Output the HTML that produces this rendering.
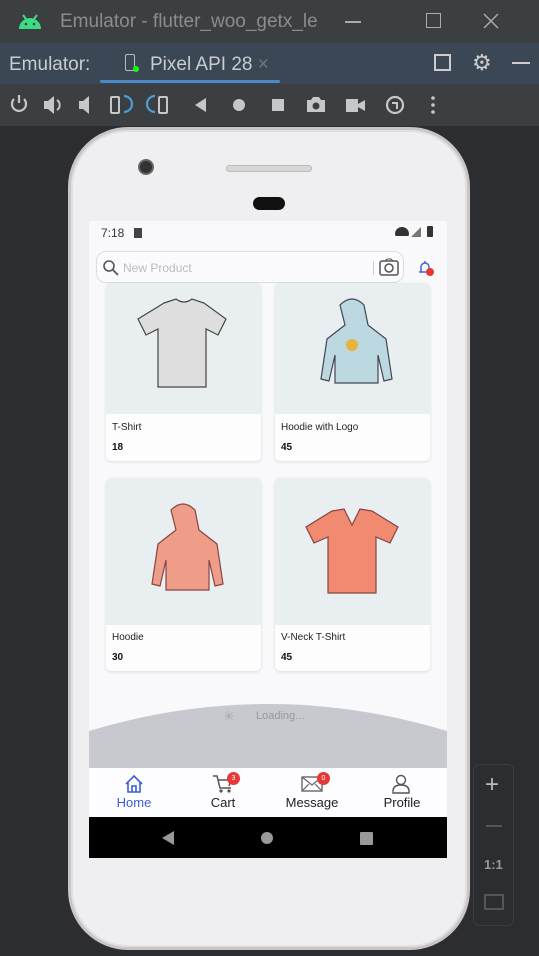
<!DOCTYPE html>
<html><head><meta charset="utf-8"><style>
*{margin:0;padding:0;box-sizing:border-box}
body{width:539px;height:956px;overflow:hidden;background:#2b2d30;font-family:"Liberation Sans",sans-serif;position:relative}
.abs{position:absolute}
.title{left:0;top:0;width:539px;height:43px;background:#3c3f41;color:#8a8d90;font-size:19px}
.tabbar{left:0;top:43px;width:539px;height:41px;background:#3b4754;color:#c9ccd0;font-size:19px}
.tool{left:0;top:84px;width:539px;height:42px;background:#3c3f41}
.phone{left:68px;top:127px;width:402px;height:823px;border-radius:60px;background:#efeff1;border:3px solid #c9c4c6;box-shadow:inset 0 0 0 2px #e2dfe0}
.screen{left:89px;top:221px;width:358px;height:637px;background:#f9f9fb;overflow:hidden}
.card{background:#fdfdfe;border-radius:5px;box-shadow:0 1px 3px rgba(0,0,0,.12);position:absolute;overflow:hidden}
.img{background:#e9eef1;position:absolute;left:0;top:0;width:100%}
.name{position:absolute;left:6px;font-size:10px;color:#222}
.price{position:absolute;left:6px;font-size:10px;font-weight:bold;color:#111}
.nav{font-size:13px;color:#222;text-align:center;position:absolute;top:27px;width:90px}
.badge{position:absolute;width:13px;height:13px;border-radius:50%;background:#e53935;color:#fff;font-size:7px;text-align:center;line-height:13px}
</style></head><body>
<div class="abs title">
 <svg class="abs" style="left:17px;top:12px" width="26" height="18" viewBox="0 0 26 18"><path d="M2 17a11 11 0 0 1 22 0z" fill="#3ddc84"/><path d="M6 3l3 4M20 3l-3 4" stroke="#3ddc84" stroke-width="2"/><circle cx="9" cy="12" r="1.3" fill="#3c3f41"/><circle cx="17" cy="12" r="1.3" fill="#3c3f41"/></svg>
 <div class="abs" style="left:60px;top:11px">Emulator - flutter_woo_getx_le</div>
 <div class="abs" style="left:345px;top:21px;width:16px;height:1.5px;background:#aaa"></div>
 <div class="abs" style="left:426px;top:13px;width:15px;height:15px;border:1.5px solid #aaa"></div>
 <svg class="abs" style="left:483px;top:13px" width="16" height="16" viewBox="0 0 16 16"><path d="M1 1l14 14M15 1L1 15" stroke="#aaa" stroke-width="1.5"/></svg>
</div>
<div class="abs tabbar">
 <div class="abs" style="left:9px;top:11px">Emulator:</div>
 <div class="abs" style="left:125px;top:11px;width:10px;height:17px;border:1.5px solid #bbb;border-radius:2px"></div>
 <div class="abs" style="left:133px;top:23px;width:6px;height:6px;background:#1f0;border-radius:50%"></div>
 <div class="abs" style="left:150px;top:11px">Pixel API 28 <span style="color:#777">×</span></div>
 <div class="abs" style="left:100px;top:37px;width:180px;height:3px;background:#4a88c7;border-radius:2px"></div>
 <div class="abs" style="left:434px;top:11px;width:17px;height:17px;border:2px solid #ccc"></div>
 <div class="abs" style="left:472px;top:7px;color:#ccc;font-size:22px">⚙</div>
 <div class="abs" style="left:512px;top:19px;width:18px;height:2px;background:#ccc"></div>
</div>
<div class="abs tool">
 <svg class="abs" style="left:0;top:0" width="539" height="42" viewBox="0 0 539 42" fill="#c7c7c7" stroke="#c7c7c7">
  <path d="M14 15a7 7 0 1 0 10 0M19 11v8" fill="none" stroke-width="2.2"/>
  <path d="M44 17h4l6-5v18l-6-5h-4z" stroke="none"/><path d="M57 16a6 6 0 0 1 0 10" fill="none" stroke-width="2"/>
  <path d="M79 17h4l6-5v18l-6-5h-4z" stroke="none"/>
  <rect x="111" y="13" width="8" height="16" rx="1" fill="none" stroke-width="2"/><path d="M124 12a6 6 0 0 1 0 16" fill="none" stroke="#4a9fd8" stroke-width="2.2"/>
  <path d="M155 12a6 6 0 0 0 0 16" fill="none" stroke="#4a9fd8" stroke-width="2.2"/><rect x="159" y="13" width="8" height="16" rx="1" fill="none" stroke-width="2"/>
  <path d="M206 14v14l-11-7z" stroke="none"/>
  <circle cx="239" cy="21" r="6" stroke="none"/>
  <rect x="272" y="15" width="12" height="12" stroke="none"/>
  <path d="M307 16h4l2-3h6l2 3h4v12h-18z" stroke="none"/><circle cx="316" cy="22" r="3.5" fill="#3c3f41" stroke="none"/>
  <path d="M346 15h12v13h-12zM358 20l7-4v11l-7-4z" stroke="none"/>
  <circle cx="395" cy="21" r="8" fill="none" stroke-width="2.2"/><path d="M392 19h5v6" fill="none" stroke-width="2"/>
  <circle cx="433" cy="14" r="1.8" stroke="none"/><circle cx="433" cy="21" r="1.8" stroke="none"/><circle cx="433" cy="28" r="1.8" stroke="none"/>
 </svg>
</div>
<div class="abs phone"></div>
<div class="abs" style="left:138px;top:159px;width:16px;height:16px;border-radius:50%;background:#333;border:2px solid #666"></div>
<div class="abs" style="left:226px;top:165px;width:86px;height:7px;border-radius:4px;background:#d6d8d8;border:1px solid #bbb"></div>
<div class="abs" style="left:253px;top:197px;width:32px;height:13px;border-radius:7px;background:#111"></div>
<div class="abs screen">
 <div class="abs" style="left:12px;top:5px;font-size:12px;color:#333">7:18 <span style="display:inline-block;width:8px;height:10px;background:#444;margin-left:6px;vertical-align:-1px"></span></div>
 <div class="abs" style="right:14px;top:5px;width:6px;height:11px;background:#333;border-radius:1px"></div>
 <div class="abs" style="right:26px;top:6px;width:0;height:0;border-left:10px solid transparent;border-bottom:10px solid #777"></div>
 <div class="abs" style="right:38px;top:6px;width:14px;height:9px;background:#333;border-radius:8px 8px 2px 2px"></div>
 <div class="abs" style="left:7px;top:30px;width:308px;height:32px;border:1px solid #dcdce6;border-radius:10px;background:#fbfbfd">
  <svg class="abs" style="left:5px;top:7px" width="18" height="18" viewBox="0 0 18 18"><circle cx="7" cy="7" r="5" stroke="#555" stroke-width="1.6" fill="none"/><path d="M11 11l5 5" stroke="#555" stroke-width="1.8"/></svg>
  <div class="abs" style="left:26px;top:9px;font-size:12px;color:#bbb">New Product</div>
  <div class="abs" style="left:276px;top:9px;width:1px;height:14px;background:#ccc"></div>
  <svg class="abs" style="left:282px;top:6px" width="20" height="18" viewBox="0 0 20 18"><rect x="1" y="3" width="18" height="14" rx="2" stroke="#555" stroke-width="1.5" fill="none"/><circle cx="10" cy="10" r="4" stroke="#555" stroke-width="1.5" fill="none"/><path d="M6 3l2-2h4l2 2" stroke="#555" fill="none"/></svg>
 </div>
 <svg class="abs" style="left:327px;top:37px" width="20" height="20" viewBox="0 0 20 20"><path d="M3 14h12M5 14V9a4 4 0 0 1 8 0v5M9 3v2" stroke="#3a66e0" stroke-width="1.5" fill="none"/><circle cx="14" cy="14" r="4" fill="#e53935"/></svg>
 <div class="card" style="left:17px;top:62px;width:155px;height:178px">
  <div class="img" style="height:131px"></div>
  <svg class="abs" style="left:28px;top:12px" width="100" height="95" viewBox="0 0 100 95"><path d="M30 8l12-4q8 6 16 0l12 4 22 16-8 16-12-6v58H24V34l-12 6-8-16z" fill="#dedede" stroke="#444" stroke-width="1.2"/></svg>
  <div class="name" style="top:139px">T-Shirt</div><div class="price" style="top:159px">18</div>
 </div>
 <div class="card" style="left:186px;top:62px;width:155px;height:178px">
  <div class="img" style="height:131px"></div>
  <svg class="abs" style="left:30px;top:12px" width="95" height="95" viewBox="0 0 95 95"><path d="M35 10q12-12 24 0l4 20 18 14 6 40-8 2-6-26v28H30V60l-6 26-8-2 6-40 18-14z" fill="#bcd9e2" stroke="#445" stroke-width="1.2"/><circle cx="47" cy="50" r="6" fill="#e8b440"/></svg>
  <div class="name" style="top:139px">Hoodie with Logo</div><div class="price" style="top:159px">45</div>
 </div>
 <div class="card" style="left:17px;top:257px;width:155px;height:193px">
  <div class="img" style="height:147px"></div>
  <svg class="abs" style="left:30px;top:22px" width="95" height="100" viewBox="0 0 95 100"><path d="M35 10q12-12 24 0l4 20 18 14 6 40-8 2-6-26v30H30V60l-6 26-8-2 6-40 18-14z" fill="#ef9d88" stroke="#844" stroke-width="1.2"/></svg>
  <div class="name" style="top:154px">Hoodie</div><div class="price" style="top:174px">30</div>
 </div>
 <div class="card" style="left:186px;top:257px;width:155px;height:193px">
  <div class="img" style="height:147px"></div>
  <svg class="abs" style="left:25px;top:25px" width="105" height="95" viewBox="0 0 105 95"><path d="M32 8l12-2 8 16 8-16 12 2 26 16-8 16-14-6v56H28V34l-14 6-8-16z" fill="#f08a70" stroke="#844" stroke-width="1.2"/></svg>
  <div class="name" style="top:154px">V-Neck T-Shirt</div><div class="price" style="top:174px">45</div>
 </div>
 <svg class="abs" style="left:0;top:483px" width="358" height="65" viewBox="0 0 358 65"><path d="M0 27Q179-27 358 27V65H0z" fill="#c8c9ce"/></svg>
 <div class="abs" style="left:134px;top:487px;color:#aaa;font-size:14px">✳</div>
 <div class="abs" style="left:167px;top:489px;color:#999;font-size:11px">Loading...</div>
 <div class="abs" style="left:0;top:547px;width:358px;height:49px;background:#fdfcff">
  <svg class="abs" style="left:35px;top:6px" width="20" height="20" viewBox="0 0 20 20"><path d="M2 10L10 2l8 8M4 8v10h12V8M8 18v-6h4v6" stroke="#3a5fd8" stroke-width="1.6" fill="none"/></svg>
  <div class="nav" style="left:0;color:#3a5fd8">Home</div>
  <svg class="abs" style="left:123px;top:6px" width="22" height="20" viewBox="0 0 22 20"><path d="M1 2h4l3 12h11M6 6h13l-2 6" stroke="#555" stroke-width="1.5" fill="none"/><circle cx="9" cy="17" r="1.6" fill="#555"/><circle cx="17" cy="17" r="1.6" fill="#555"/></svg>
  <div class="badge" style="left:138px;top:4px">3</div>
  <div class="nav" style="left:89px">Cart</div>
  <svg class="abs" style="left:212px;top:8px" width="22" height="16" viewBox="0 0 22 16"><rect x="1" y="1" width="20" height="14" stroke="#666" stroke-width="1.4" fill="none"/><path d="M1 1l10 8 10-8M1 15l7-7M21 15l-7-7" stroke="#666" stroke-width="1.2" fill="none"/></svg>
  <div class="badge" style="left:228px;top:4px">0</div>
  <div class="nav" style="left:178px">Message</div>
  <svg class="abs" style="left:303px;top:6px" width="18" height="20" viewBox="0 0 18 20"><circle cx="9" cy="6" r="4.5" stroke="#555" stroke-width="1.4" fill="none"/><path d="M1 19v-3q1-5 8-5t8 5v3z" stroke="#555" stroke-width="1.4" fill="none"/></svg>
  <div class="nav" style="left:268px">Profile</div>
 </div>
 <div class="abs" style="left:0;top:596px;width:358px;height:41px;background:#000">
  <div class="abs" style="left:73px;top:14px;border-right:12px solid #999;border-top:7px solid transparent;border-bottom:7px solid transparent"></div>
  <div class="abs" style="left:172px;top:15px;width:12px;height:12px;border-radius:50%;background:#999"></div>
  <div class="abs" style="left:271px;top:15px;width:13px;height:13px;background:#999;border-radius:1px"></div>
 </div>
</div>
<div class="abs" style="left:473px;top:764px;width:41px;height:162px;border:1px solid #3a3c3f;border-radius:6px;background:#2b2d30">
 <div class="abs" style="left:11px;top:6px;color:#bbb;font-size:24px">+</div>
 <div class="abs" style="left:12px;top:60px;width:16px;height:2px;background:#555"></div>
 <div class="abs" style="left:10px;top:92px;color:#999;font-size:13px;font-weight:bold">1:1</div>
 <div class="abs" style="left:10px;top:129px;width:20px;height:16px;border:2px solid #555"></div>
</div>
</body></html>
